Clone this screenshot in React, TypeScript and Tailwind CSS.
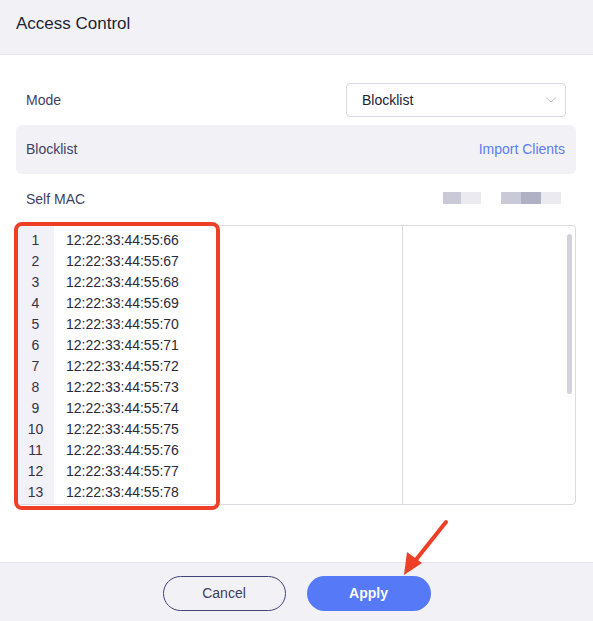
import React from "react";

const macs = Array.from({ length: 13 }, (_, i) => `12:22:33:44:55:${66 + i}`);

export default function App() {
  return (
    <div
      className="relative w-[593px] h-[621px] bg-white flex flex-col overflow-hidden text-[#2c2c44]"
      style={{ fontFamily: '"Liberation Sans", Arial, sans-serif' }}
    >
      <div className="h-[55px] shrink-0 bg-[#f2f2f6] border-b border-[#e6e6ec] flex items-center px-4 pb-[6px]">
        <span className="text-[17px] text-[#1f1f33]">Access Control</span>
      </div>

      <div className="flex-1 pl-[16px] pr-[17px] pt-[28px]">
        <div className="h-[34px] flex items-center justify-between">
          <span className="pl-[10px] text-[14px] text-[#3f3f66]">Mode</span>
          <div className="w-[220px] h-[34px] mr-[10px] border border-[#d9d9e0] rounded-[4px] flex items-center justify-between pl-[15px] pr-[8px]">
            <span className="text-[14px] text-[#222233]">Blocklist</span>
            <svg width="12" height="8" viewBox="0 0 12 8" fill="none">
              <path d="M1 1.5 L6 6 L11 1.5" stroke="#c0c0cc" strokeWidth="1" />
            </svg>
          </div>
        </div>

        <div className="mt-[8px] h-[49px] rounded-[6px] bg-[#f2f2f6] flex items-center justify-between pl-[10px] pr-[11px]">
          <span className="text-[14px] text-[#3f3f66]">Blocklist</span>
          <span className="text-[14px] text-[#5b7cf2]">Import Clients</span>
        </div>

        <div className="h-[51px] flex items-center justify-between">
          <span className="pl-[10px] text-[14px] text-[#3f3f66]">Self MAC</span>
          <div className="flex items-center gap-[20px] pr-[15px] -mt-[3px]">
            <div className="flex h-[12px]">
              <div className="w-[18px] bg-[#c9c9d7]" />
              <div className="w-[20px] bg-[#eaeaf0]" />
            </div>
            <div className="flex h-[12px]">
              <div className="w-[20px] bg-[#c9c9d7]" />
              <div className="w-[20px] bg-[#b1b1c5]" />
              <div className="w-[20px] bg-[#eaeaf0]" />
            </div>
          </div>
        </div>

        <div className="h-[280px] border border-[#d9d9de] rounded-[4px] flex overflow-hidden">
          <div className="w-[386px] flex border-r border-[#d9d9de]">
            <div className="w-[37px] bg-[#f2f1f7] pt-[4px]">
              {macs.map((_, i) => (
                <div key={i} className="h-[21px] leading-[21px] text-center text-[14px] text-[#333344]">
                  {i + 1}
                </div>
              ))}
            </div>
            <div className="flex-1 pt-[4px] pl-[12px]">
              {macs.map((m) => (
                <div key={m} className="h-[21px] leading-[21px] text-[14px] text-[#2a2a3a]">
                  {m}
                </div>
              ))}
            </div>
          </div>
          <div className="flex-1 relative">
            <div className="absolute right-[3px] top-[8px] w-[5px] h-[160px] rounded-full bg-[#d2d2dc]" />
          </div>
        </div>
      </div>

      <div className="h-[59px] shrink-0 bg-[#f2f2f6] border-t border-[#e6e6ec] flex items-center justify-center gap-[21px] pt-[3px]">
        <button className="w-[123px] h-[35px] rounded-full border border-[#44447a] text-[14px] text-[#3d3d5c] bg-transparent">
          Cancel
        </button>
        <button className="w-[124px] h-[35px] rounded-full bg-[#5579f7] text-[14px] text-white font-bold">
          Apply
        </button>
      </div>

      <div className="absolute left-[14px] top-[222px] w-[206px] h-[288px] border-[4px] border-[#ee4026] rounded-[8px] pointer-events-none" />

      <svg className="absolute left-0 top-0 pointer-events-none" width="593" height="621">
        <line x1="446" y1="522" x2="411" y2="566" stroke="#ee4026" strokeWidth="4" strokeLinecap="round" />
        <polygon points="404,575 407,552 422,563" fill="#ee4026" />
      </svg>
    </div>
  );
}
